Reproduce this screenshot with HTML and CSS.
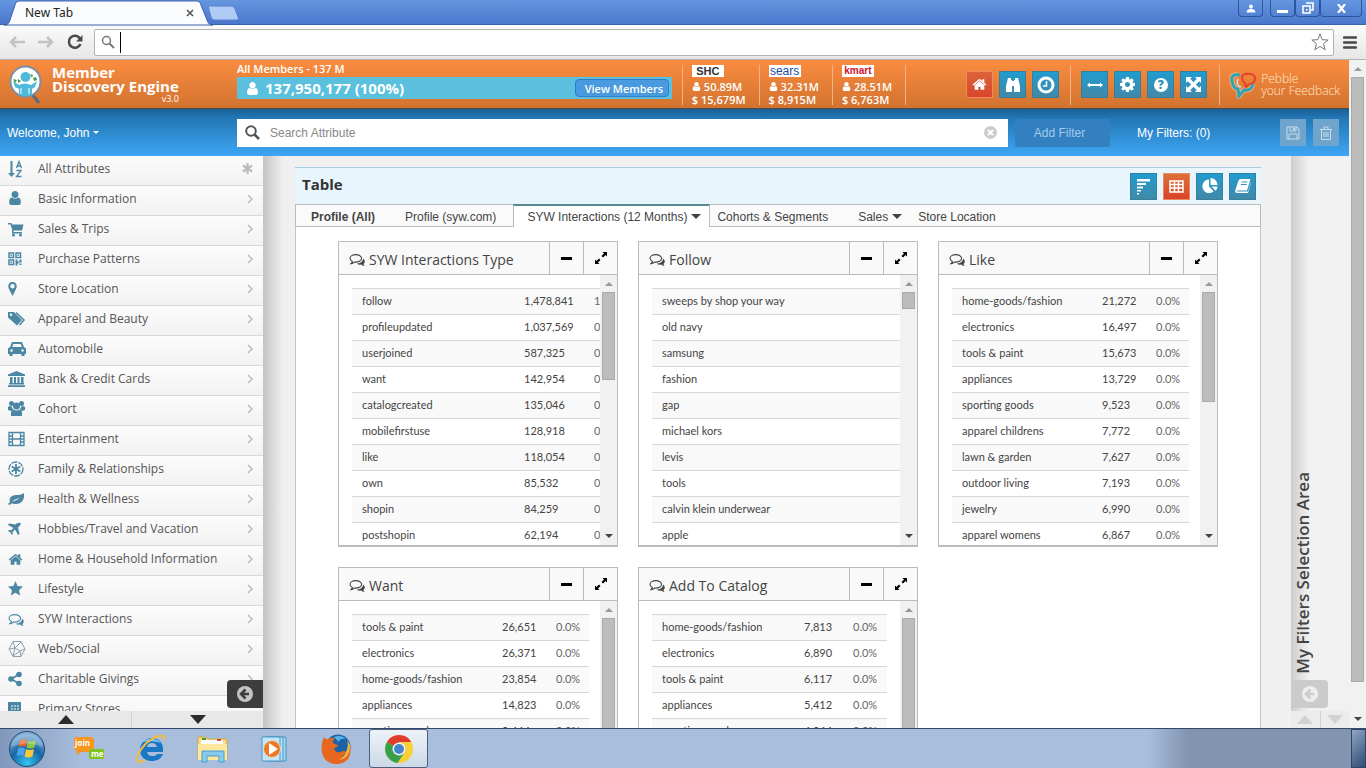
FILE: index.html
```html
<!DOCTYPE html>
<html lang="en">
<head>
  <meta charset="UTF-8">
  <title>Member Discovery Engine</title>
  <link rel="stylesheet" href="styles.css">
</head>
<body>
  <!-- shared icons -->
  <svg class="sprite" aria-hidden="true">
    <symbol id="i-user" viewBox="128 128 1536 1536"><path d="M1536 1399q0 109-62.5 187t-150.5 78h-854q-88 0-150.5-78t-62.5-187q0-85 8.5-160.5t31.5-152 58.5-131 94-89 134.5-34.5q131 128 313 128t313-128q76 0 134.5 34.5t94 89 58.5 131 31.5 152 8.5 160.5zm-256-887q0 159-112.5 271.5t-271.5 112.5-271.5-112.5-112.5-271.5 112.5-271.5 271.5-112.5 271.5 112.5 112.5 271.5z"/></symbol>
    <symbol id="i-home" viewBox="0 128 1792 1536"><path d="M1472 992v480q0 26-19 45t-45 19h-384v-384h-256v384h-384q-26 0-45-19t-19-45v-480q0-1 .5-3t.5-3l575-474 575 474q1 2 1 6zm223-69l-62 74q-8 9-21 11h-3q-13 0-21-7l-692-577-692 577q-12 8-24 7-13-2-21-11l-62-74q-8-10-7-23.5t11-21.5l719-599q32-26 76-26t76 26l244 204v-195q0-14 9-23t23-9h192q14 0 23 9t9 23v408l219 182q10 8 11 21.5t-7 23.5z"/></symbol>
    <symbol id="i-comments" viewBox="0 0 16 14"><path d="M6.800 1.600C3.600 1.600 1 3.200 1 5.300c0 1.300 1 2.400 2.400 3.100-.1.900-.6 1.500-1.400 2.200 1.500-.1 2.600-.7 3.400-1.500 4 .4 7.200-1.300 7.200-3.800 0-2.100-2.600-3.700-5.800-3.700z" fill="none" stroke="currentColor" stroke-width="1.100"/><path d="M14 5.500c2.400 1.900 2.200 4.100.4 5.400.1.900.6 1.400 1.300 2-1.600 0-2.800-.5-3.600-1.300-1.800.2-3.400-.1-4.500-.9 3.800-.1 6.600-2.200 6.400-5.200z"/></symbol>
    <symbol id="i-chevron" viewBox="0 0 6 10"><path d="M1 1l4 4-4 4" fill="none" stroke="#bbb" stroke-width="1.500"/></symbol>
    <symbol id="i-up" viewBox="0 0 8 4"><path d="M0 4l4-4 4 4z"/></symbol>
    <symbol id="i-down" viewBox="0 0 8 4"><path d="M0 0l4 4 4-4z"/></symbol>
    <symbol id="i-expand" viewBox="0 0 12 12"><path d="M7.500 0H12v4.500L10.500 3 8 5.500 6.500 4 9 1.500zM4.500 12H0V7.500L1.500 9 4 6.500 5.500 8 3 10.500z"/></symbol>
    <symbol id="i-back" viewBox="0 0 18 18"><circle cx="9" cy="9" r="8"/><path d="M9.500 4.500L5 9l4.500 4.500M5.500 9H13" fill="none" stroke="var(--arrow)" stroke-width="2.500"/></symbol>
  </svg>

  <div class="titlebar">
    <div class="browser-tab">
      <svg class="tab-shape" viewBox="0 0 203 25" preserveAspectRatio="none"><path d="M-3 25c4 0 5-2 6-5l5-15c1-3 2-4 5-4h176c3 0 4 1 5 4l6 15c1 3 2 5 6 5z" fill="#fbfcfe" stroke="#3c62ac"/></svg>
      <span>New Tab</span>
      <button class="tab-close" aria-label="Close tab"><svg width="8" height="8" viewBox="0 0 8 8"><path d="M1 1l6 6M7 1L1 7" stroke="#555" stroke-width="1.600"/></svg></button>
    </div>
    <button class="new-tab" aria-label="New tab"><svg width="32" height="16" viewBox="0 0 32 16"><path d="M1 1h23c2 0 3 1 4 3l3 8c1 2 0 3-2 3H8c-2 0-3-1-4-3z" fill="#adcbf5" stroke="#5a82cc"/></svg></button>
    <div class="window-controls">
      <button aria-label="Profile"><svg width="10" height="11" viewBox="0 0 10 11"><circle cx="5" cy="3.500" r="2"/><path d="M.5 9.500c0-5 9-5 9 0z"/></svg></button>
      <div class="control-group">
        <button aria-label="Minimize"><svg width="11" height="11" viewBox="0 0 11 11"><path d="M0 7h11v3H0z"/></svg></button>
        <button aria-label="Restore"><svg width="12" height="12" viewBox="0 0 12 12"><path d="M4 1h7v7H9M1 4h7v7H1z" fill="none" stroke="#fff" stroke-width="1.600"/><path d="M4 7h1.500v1.500H4z"/></svg></button>
        <button class="wide" aria-label="Close"><svg width="9" height="9" viewBox="0 0 9 9"><path d="M1 0l7 9M8 0L1 9" stroke="#fff" stroke-width="2.200"/></svg></button>
      </div>
    </div>
  </div>

  <div class="toolbar">
    <button aria-label="Back"><svg width="16" height="14" viewBox="0 0 16 14"><path d="M7 2L2 7l5 5M2 7h14" fill="none" stroke="#c2c2c2" stroke-width="2.500"/></svg></button>
    <button aria-label="Forward"><svg width="16" height="14" viewBox="0 0 16 14"><path d="M9 2l5 5-5 5M14 7H0" fill="none" stroke="#c2c2c2" stroke-width="2.500"/></svg></button>
    <button aria-label="Reload"><svg width="16" height="16" viewBox="0 0 16 16"><path d="M13 4.500A6 6 0 1 0 13.500 10" fill="none" stroke="#4a4a4a" stroke-width="2.500"/><path d="M15.500 1v6.500H9z" fill="#4a4a4a"/></svg></button>
    <div class="address">
      <svg width="14" height="14" viewBox="0 0 14 14"><circle cx="5.500" cy="5.500" r="4" fill="none" stroke="#777" stroke-width="1.500"/><path d="M8.500 8.500L13 13" stroke="#777" stroke-width="2"/></svg>
      <span class="cursor"></span>
      <input type="text" aria-label="Address">
      <svg width="18" height="18" viewBox="0 0 18 18"><path d="M9 1l2.200 5.700 6 .3-4.700 3.800 1.600 5.900L9 13.400l-5.100 3.300 1.600-5.900L.8 7l6-.3z" fill="none" stroke="#777"/></svg>
    </div>
    <button class="menu" aria-label="Menu"><svg width="14" height="13" viewBox="0 0 14 13"><path d="M1 1.500h12M1 6.500h12M1 11.500h12" stroke="#484848" stroke-width="2.500" stroke-linecap="round"/></svg></button>
  </div>

  <div class="viewport">
    <div class="page">
      <header class="header">
        <div class="brand">
          <svg width="34" height="40" viewBox="0 0 34 40"><path d="M23 29l7 9" stroke="#5d6a7d" stroke-width="3"/><circle cx="16.500" cy="16.500" r="15" fill="#fff" stroke="#7c8da5" stroke-width="2"/><path d="M4 16l6 4q6-3 12 0l6-4-2 6-3 2v6q-6 3-13 0v-6l-4-2z" fill="#4fb9da"/><circle cx="16.500" cy="12" r="5" fill="#4fb9da"/><path d="M4 14l4 1-2 3zM9 14l3 2-3 2zM21 9l3 1-1 3zM24 13l3-1 1 3-3 1z" fill="#3f9e46"/><path d="M12 23v6M20 23v6" stroke="#fff"/></svg>
          <div class="brand-text">Member<br>Discovery Engine<small>v3.0</small></div>
        </div>
        <div class="members">
          <span class="members-label">All Members - 137 M</span>
          <div class="members-bar">
            <svg width="13" height="13"><use href="#i-user"/></svg>
            <strong>137,950,177 (100%)</strong>
            <button>View Members</button>
          </div>
        </div>
        <div class="stat">
          <span class="store shc">SHC</span>
          <span><svg width="9" height="9"><use href="#i-user"/></svg>50.89M</span>
          <span>$ 15,679M</span>
        </div>
        <div class="stat">
          <span class="store sears">sears</span>
          <span><svg width="9" height="9"><use href="#i-user"/></svg>32.31M</span>
          <span>$ 8,915M</span>
        </div>
        <div class="stat">
          <span class="store kmart">kmart</span>
          <span><svg width="9" height="9"><use href="#i-user"/></svg>28.51M</span>
          <span>$ 6,763M</span>
        </div>
        <div class="tools tools-first">
          <button class="tile tile-home" aria-label="Home"><svg width="15" height="13"><use href="#i-home"/></svg></button>
          <button class="tile" aria-label="Find"><svg width="16" height="16" viewBox="0 0 16 16"><path d="M3 1h3v2h1v12H1V9zM10 1h3l2 8v6H9V3h1z"/><path d="M7 4h2v5H7z"/></svg></button>
          <button class="tile" aria-label="History"><svg width="18" height="18" viewBox="0 0 18 18"><circle cx="9" cy="9" r="7" fill="none" stroke="#fff" stroke-width="3"/><path d="M9.500 5v5H6" fill="none" stroke="#fff" stroke-width="1.500"/></svg></button>
        </div>
        <div class="tools">
          <button class="tile" aria-label="Width"><svg width="16" height="8" viewBox="0 0 16 8"><path d="M0 4l3-2.500V3h10V1.500L16 4l-3 2.500V5H3v1.500z"/></svg></button>
          <button class="tile" aria-label="Settings"><svg width="15" height="15" viewBox="128 128 1536 1536"><path d="M1152 896q0-106-75-181t-181-75-181 75-75 181 75 181 181 75 181-75 75-181zm512-109v222q0 12-8 23t-20 13l-185 28q-19 54-39 91 35 50 107 138 10 12 10 25t-9 23q-27 37-99 108t-94 71q-12 0-26-9l-138-108q-44 23-91 38-16 136-29 186-7 28-36 28h-222q-14 0-24.500-8.500t-11.500-21.500l-28-184q-49-16-90-37l-141 107q-10 9-25 9-14 0-25-11-126-114-165-168-7-10-7-23 0-12 8-23 15-21 51-66.500t54-70.500q-27-50-41-99l-183-27q-13-2-21-12.500t-8-23.500v-222q0-12 8-23t19-13l186-28q14-46 39-92-40-57-107-138-10-12-10-24 0-10 9-23 26-36 98.500-107.500t94.500-71.500q13 0 26 10l138 107q44-23 91-38 16-136 29-186 7-28 36-28h222q14 0 24.500 8.500t11.500 21.500l28 184q49 16 90 37l142-107q9-9 24-9 13 0 25 10 129 119 165 170 7 8 7 22 0 12-8 23-15 21-51 66.500t-54 70.500q26 50 41 98l183 28q13 2 21 12.500t8 23.500z"/></svg></button>
          <button class="tile" aria-label="Help"><span class="help">?</span></button>
          <button class="tile" aria-label="Full screen"><svg width="15" height="15" viewBox="0 0 15 15"><path d="M0 0h6L4.200 1.800 7.500 5.200l3.300-3.400L9 0h6v6l-1.800-1.800-3.400 3.300 3.400 3.300L15 9v6H9l1.800-1.800-3.300-3.400-3.300 3.400L6 15H0V9l1.800 1.800 3.400-3.300-3.400-3.300L0 6z"/></svg></button>
        </div>
        <a class="pebble" href="#">
          <svg width="28" height="28" viewBox="0 0 28 28" fill="none"><path d="M9 4C4 3 2 5 3 10c1 6 3 8 6 8l1 7 5-6c6 1 8-2 9-6" fill="none" stroke="#f8dcc4" stroke-width="5" opacity=".5"/><path d="M11 4C4 3 2 5 3 10c1 6 3 8 6 8l1 7 5-6c6 1 8-2 9-6" fill="none" stroke="#2aa5b5" stroke-width="3"/><path d="M13 6c0-5 13-4 13 1 0 6-4 6-6 6l-3 3-1-4c-2-1-3-3-3-6z" fill="none" stroke="#e8402c" stroke-width="2"/><path d="M9 8c-2 5 0 7 3 8" fill="none" stroke="#cfe9ea" stroke-width="1.500"/></svg>
          <span>Pebble<br>your Feedback</span>
        </a>
      </header>

      <div class="filterbar">
        <button class="welcome">Welcome, John <svg width="6" height="3"><use href="#i-down"/></svg></button>
        <div class="search">
          <svg width="15" height="15" viewBox="0 0 15 15"><circle cx="6" cy="6" r="4.800" fill="none" stroke="#555" stroke-width="2"/><path d="M9.500 9.500L14 14" stroke="#555" stroke-width="2.500"/></svg>
          <input type="text" placeholder="Search Attribute" aria-label="Search Attribute">
          <button aria-label="Clear"><svg width="13" height="13" viewBox="0 0 13 13"><circle cx="6.500" cy="6.500" r="6.500" fill="#ccc"/><path d="M4 4l5 5M9 4L4 9" stroke="#fff" stroke-width="2"/></svg></button>
        </div>
        <button class="add-filter">Add Filter</button>
        <span class="my-filters">My Filters: (0)</span>
        <div class="filter-actions">
          <button aria-label="Save"><svg width="14" height="14" viewBox="0 0 14 14"><path d="M1 1h10l2 2v10H1zM4 1v4h6V1M3 13V8h8v5" fill="none" stroke="#c9dcea"/><path d="M7 2h2v2H7z" fill="#c9dcea"/></svg></button>
          <button aria-label="Delete"><svg width="14" height="14" viewBox="0 0 14 14"><path d="M1 3.500h12M5 3V1h4v2M2.500 3.500v10h9v-10M5 6v5M7 6v5M9 6v5" fill="none" stroke="#c9dcea"/></svg></button>
        </div>
      </div>

      <div class="body">
        <nav class="sidebar">
          <ul>
            <li><a href="#"><svg class="icon" viewBox="0 0 18 18"><path d="M2.500 1h2v12H7l-3.500 4L0 13h2.500z"/><path d="M8.500 8L11 1.500 13.500 8M9.500 6h3M8.500 10.500h4.500L8.500 16.500h5" fill="none" stroke="currentColor" stroke-width="1.300"/></svg>All Attributes<svg class="mark" width="11" height="11" viewBox="0 0 11 11"><path d="M5.500 0v11M1 2.500l9 6M10 2.500l-9 6" stroke="#bbb" stroke-width="2.200"/></svg></a></li>
            <li><a href="#"><svg class="icon" viewBox="0 0 18 18"><svg width="14" height="14" y="1"><use href="#i-user"/></svg></svg>Basic Information<svg class="arrow"><use href="#i-chevron"/></svg></a></li>
            <li><a href="#"><svg class="icon" viewBox="0 0 18 18"><path d="M0 3h3.500l.4 1.500H15.500L14 10.500H5.500V12H14v1.500H4L4 9 2.500 4.500H0z"/><circle cx="5.500" cy="15" r="1.500"/><circle cx="12.500" cy="15" r="1.500"/></svg>Sales &amp; Trips<svg class="arrow"><use href="#i-chevron"/></svg></a></li>
            <li><a href="#"><svg class="icon" viewBox="0 0 18 18"><path d="M1 3h4.500v4.500H1zM8 3h4.500v4.500H8zM1 10h4.500v4.500H1z" fill="none" stroke="currentColor" stroke-width="1.500"/><path d="M2.500 4.500H4V6H2.500zM9.500 4.500H11V6H9.500zM2.500 11.500H4V13H2.500zM7.500 9.500h2v2h2v-2h2v3h-3v1h-1v2h-2zM11.500 13.500h2v1.500h-2z"/></svg>Purchase Patterns<svg class="arrow"><use href="#i-chevron"/></svg></a></li>
            <li><a href="#"><svg class="icon" viewBox="0 0 18 18"><path d="M4.500 2C1.500 2 .3 4 .3 6.300.300 8 1 9 1.500 10l3 6 3-6c.5-1 1.200-2 1.200-3.700C8.700 4 7.500 2 4.500 2zm0 2a2.200 2.200 0 1 1 0 4.400 2.200 2.200 0 0 1 0-4.400z"/></svg>Store Location<svg class="arrow"><use href="#i-chevron"/></svg></a></li>
            <li><a href="#"><svg class="icon" viewBox="0 0 18 18"><path d="M0 2h6l8 8-5 5.500-9-8zm3 1.500a1.200 1.200 0 1 0 0 2.400 1.200 1.200 0 0 0 0-2.400z" fill-rule="evenodd"/><path d="M8 2.500l8 7.500-4.500 5" fill="none" stroke="currentColor" stroke-width="1.500"/></svg>Apparel and Beauty<svg class="arrow"><use href="#i-chevron"/></svg></a></li>
            <li><a href="#"><svg class="icon" viewBox="0 0 18 18"><path d="M4 2h10l2 5 2 1.500V14h-1.500v2h-3v-2h-9v2h-3v-2H0V8.500L2 7zm1.300 2L4.200 7h9.600l-1.100-3zM3.500 9.200a1.300 1.300 0 1 0 0 2.600 1.300 1.300 0 0 0 0-2.600zm11 0a1.300 1.300 0 1 0 0 2.600 1.300 1.300 0 0 0 0-2.600z" fill-rule="evenodd"/></svg>Automobile<svg class="arrow"><use href="#i-chevron"/></svg></a></li>
            <li><a href="#"><svg class="icon" viewBox="0 0 18 18"><path d="M8.500 1L17 4.500V6H0V4.500zM2 7h2.500v6H6V7h2v6h1.500V7h2v6H13V7h2.500v6h.5v1.500H1V13h1zM0 15.200h17V17H0z"/></svg>Bank &amp; Credit Cards<svg class="arrow"><use href="#i-chevron"/></svg></a></li>
            <li><a href="#"><svg class="icon" viewBox="0 0 18 18"><circle cx="3.500" cy="3.500" r="2.500"/><circle cx="13.500" cy="3.500" r="2.500"/><circle cx="8.500" cy="6" r="3.500"/><path d="M0 10V7q2-2 4 0c.3 1.500 1 2.500 2 3-2 0-3 1-3 1zM17 10V7q-2-2-4 0c-.3 1.500-1 2.500-2 3 2 0 3 1 3 1zM3 16v-3q0-3 2.500-3.500 3 2 6 0Q14 10 14 13v3z"/></svg>Cohort<svg class="arrow"><use href="#i-chevron"/></svg></a></li>
            <li><a href="#"><svg class="icon" viewBox="0 0 18 18"><path d="M1 2.500h15v13H1zM4.500 2.500v13M12.500 2.500v13M4.500 9h8M1 6h3.500M1 9h3.500M1 12h3.500M12.500 6H16M12.500 9H16M12.500 12H16" fill="none" stroke="currentColor" stroke-width="1.300"/></svg>Entertainment<svg class="arrow"><use href="#i-chevron"/></svg></a></li>
            <li><a href="#"><svg class="icon" viewBox="0 0 18 18"><circle cx="8" cy="9" r="7" fill="none" stroke="currentColor" stroke-width="1.300" stroke-dasharray="6 1"/><path d="M8 4v10M3.700 6.500l8.600 5M12.300 6.500l-8.600 5" stroke="currentColor" stroke-width="1.800"/></svg>Family &amp; Relationships<svg class="arrow"><use href="#i-chevron"/></svg></a></li>
            <li><a href="#"><svg class="icon" viewBox="0 0 18 18"><path d="M16 3c.8 7-2.500 11-8 11-2 0-3-.5-4.500-.5L1.500 15 0 14l2-2C.500 7.500 4 5 9 5c3 0 5-.5 7-2zM4 11.500c3-.5 5.500-1.500 8-4-3 1.500-5.500 1.800-8 4z" fill-rule="evenodd"/></svg>Health &amp; Wellness<svg class="arrow"><use href="#i-chevron"/></svg></a></li>
            <li><a href="#"><svg class="icon" viewBox="0 0 18 18"><path d="M12.500 3c.5.5 0 2-1.500 3.500l-1 1L11.500 14l-1.500 1-3-5.500-2.500 2.500.3 2-1 1-1.300-2.500L0 11l1-1 2 .3L5.500 8 0 5l1-1.500 6.500 1 1-1C10 2.500 12 2.500 12.500 3z"/></svg>Hobbies/Travel and Vacation<svg class="arrow"><use href="#i-chevron"/></svg></a></li>
            <li><a href="#"><svg class="icon" viewBox="0 0 18 18"><svg width="15" height="13" y="3"><use href="#i-home"/></svg></svg>Home &amp; Household Information<svg class="arrow"><use href="#i-chevron"/></svg></a></li>
            <li><a href="#"><svg class="icon" viewBox="0 0 18 18"><path d="M7.500 1l2 5 5.500.5-4 3.700 1.200 5.300-4.700-2.800-4.700 2.800L4 10.200 0 6.500 5.500 6z"/></svg>Lifestyle<svg class="arrow"><use href="#i-chevron"/></svg></a></li>
            <li><a href="#"><svg class="icon" viewBox="0 0 18 18"><svg width="16" height="14" y="3"><use href="#i-comments"/></svg></svg>SYW Interactions<svg class="arrow"><use href="#i-chevron"/></svg></a></li>
            <li><a href="#"><svg class="icon" viewBox="0 0 18 18"><path d="M5 1.500h8L17 9l-4 7.500H5L1 9zM5 2l2 6 6-6M1 9l6-1 5 3 5-2M5 16l2-8M5 16l7-5 1 5" fill="none" stroke="#7d97a5" stroke-width=".9"/></svg>Web/Social<svg class="arrow"><use href="#i-chevron"/></svg></a></li>
            <li><a href="#"><svg class="icon" viewBox="0 0 18 18"><circle cx="11" cy="4.500" r="2.800"/><circle cx="3" cy="9" r="2.800"/><circle cx="11" cy="13.500" r="2.800"/><path d="M11 4.500L3 9l8 4.500" fill="none" stroke="currentColor" stroke-width="1.800"/></svg>Charitable Givings<svg class="arrow"><use href="#i-chevron"/></svg></a></li>
            <li><a href="#"><svg class="icon" viewBox="0 0 18 18"><path d="M0 2h13v14H0z"/><path d="M3 6h2m1 0h2m1 0h2M3 9h2m1 0h2m1 0h2M3 12h2m1 0h2m1 0h2" stroke="#fff"/></svg>Primary Stores</a></li>
          </ul>
          <div class="pager">
            <button aria-label="Scroll up"><svg width="16" height="9" viewBox="0 0 8 4" preserveAspectRatio="none"><path d="M0 4l4-4 4 4z"/></svg></button>
            <button aria-label="Scroll down"><svg width="16" height="9" viewBox="0 0 8 4" preserveAspectRatio="none"><path d="M0 0l4 4 4-4z"/></svg></button>
          </div>
          <button class="collapse" aria-label="Collapse"><svg width="18" height="18"><use href="#i-back"/></svg></button>
        </nav>

        <main class="main">
          <div class="panel-head">
            <h1>Table</h1>
            <div class="views">
              <button class="tile" aria-label="Bars"><svg width="16" height="17" viewBox="0 0 16 17"><path d="M1 1h13v2.500H1zM1 5h9v2H1zM1 8.500h6v2H1zM1 12h4v1.500H1zM1 15h2v1.500H1z"/></svg></button>
              <button class="tile tile-table" aria-label="Table"><svg width="15" height="13" viewBox="0 0 15 13"><path d="M1 1h13v11H1zM1 4.500h13M1 8h13M5.500 1v11M9.500 1v11" fill="none" stroke="#fff" stroke-width="1.500"/></svg></button>
              <button class="tile" aria-label="Pie"><svg width="16" height="16" viewBox="0 0 16 16"><path d="M7 1.500v7l4.800 4.800A6.800 6.800 0 1 1 7 1.500zM8.500 0A7 7 0 0 1 15.500 7h-7zM9.500 8.500h6c0 2-.8 3.300-2 4.300z"/></svg></button>
              <button class="tile" aria-label="Book"><svg width="16" height="14" viewBox="0 0 16 14"><path d="M5 0h10.500L12 11.500H2.500c-1 0-1 1 0 1H13L16 3v1l-3 10H2C0 14 0 12 .5 10.500L3.500 1.500z"/><path d="M6.500 3h6M5.800 5.500h6" stroke="#3a93bd"/></svg></button>
            </div>
          </div>
          <div class="tabs">
            <button class="first">Profile (All)</button>
            <button>Profile (syw.com)</button>
            <button class="active">SYW Interactions (12 Months) <svg width="10" height="5"><use href="#i-down"/></svg></button>
            <button class="after-menu">Cohorts &amp; Segments</button>
            <button class="has-menu">Sales <svg width="10" height="5"><use href="#i-down"/></svg></button>
            <button class="after-menu">Store Location</button>
          </div>
          <div class="cards">
            <section class="card">
              <div class="card-head">
                <h2><svg width="16" height="14"><use href="#i-comments"/></svg>SYW Interactions Type</h2>
                <button aria-label="Minimize"><svg width="11" height="3"><rect width="11" height="3"/></svg></button>
                <button aria-label="Expand"><svg width="12" height="12"><use href="#i-expand"/></svg></button>
              </div>
              <div class="card-body">
                <div class="table-wrap">
                  <table class="wide-table">
                    <tr><td>follow</td><td>1,478,841</td><td>1</td></tr>
                    <tr><td>profileupdated</td><td>1,037,569</td><td>0</td></tr>
                    <tr><td>userjoined</td><td>587,325</td><td>0</td></tr>
                    <tr><td>want</td><td>142,954</td><td>0</td></tr>
                    <tr><td>catalogcreated</td><td>135,046</td><td>0</td></tr>
                    <tr><td>mobilefirstuse</td><td>128,918</td><td>0</td></tr>
                    <tr><td>like</td><td>118,054</td><td>0</td></tr>
                    <tr><td>own</td><td>85,532</td><td>0</td></tr>
                    <tr><td>shopin</td><td>84,259</td><td>0</td></tr>
                    <tr><td>postshopin</td><td>62,194</td><td>0</td></tr>
                  </table>
                </div>
                <div class="scrollbar"><svg class="up"><use href="#i-up"/></svg><i class="thumb thumb-medium"></i><svg class="down"><use href="#i-down"/></svg></div>
              </div>
            </section>

            <section class="card">
              <div class="card-head">
                <h2><svg width="16" height="14"><use href="#i-comments"/></svg>Follow</h2>
                <button aria-label="Minimize"><svg width="11" height="3"><rect width="11" height="3"/></svg></button>
                <button aria-label="Expand"><svg width="12" height="12"><use href="#i-expand"/></svg></button>
              </div>
              <div class="card-body">
                <div class="table-wrap">
                  <table class="wide-table">
                    <tr><td>sweeps by shop your way</td></tr>
                    <tr><td>old navy</td></tr>
                    <tr><td>samsung</td></tr>
                    <tr><td>fashion</td></tr>
                    <tr><td>gap</td></tr>
                    <tr><td>michael kors</td></tr>
                    <tr><td>levis</td></tr>
                    <tr><td>tools</td></tr>
                    <tr><td>calvin klein underwear</td></tr>
                    <tr><td>apple</td></tr>
                  </table>
                </div>
                <div class="scrollbar"><svg class="up"><use href="#i-up"/></svg><i class="thumb thumb-small"></i><svg class="down"><use href="#i-down"/></svg></div>
              </div>
            </section>

            <section class="card">
              <div class="card-head">
                <h2><svg width="16" height="14"><use href="#i-comments"/></svg>Like</h2>
                <button aria-label="Minimize"><svg width="11" height="3"><rect width="11" height="3"/></svg></button>
                <button aria-label="Expand"><svg width="12" height="12"><use href="#i-expand"/></svg></button>
              </div>
              <div class="card-body">
                <div class="table-wrap">
                  <table>
                    <tr><td>home-goods/fashion</td><td>21,272</td><td>0.0%</td></tr>
                    <tr><td>electronics</td><td>16,497</td><td>0.0%</td></tr>
                    <tr><td>tools &amp; paint</td><td>15,673</td><td>0.0%</td></tr>
                    <tr><td>appliances</td><td>13,729</td><td>0.0%</td></tr>
                    <tr><td>sporting goods</td><td>9,523</td><td>0.0%</td></tr>
                    <tr><td>apparel childrens</td><td>7,772</td><td>0.0%</td></tr>
                    <tr><td>lawn &amp; garden</td><td>7,627</td><td>0.0%</td></tr>
                    <tr><td>outdoor living</td><td>7,193</td><td>0.0%</td></tr>
                    <tr><td>jewelry</td><td>6,990</td><td>0.0%</td></tr>
                    <tr><td>apparel womens</td><td>6,867</td><td>0.0%</td></tr>
                  </table>
                </div>
                <div class="scrollbar"><svg class="up"><use href="#i-up"/></svg><i class="thumb thumb-large"></i><svg class="down"><use href="#i-down"/></svg></div>
              </div>
            </section>

            <section class="card">
              <div class="card-head">
                <h2><svg width="16" height="14"><use href="#i-comments"/></svg>Want</h2>
                <button aria-label="Minimize"><svg width="11" height="3"><rect width="11" height="3"/></svg></button>
                <button aria-label="Expand"><svg width="12" height="12"><use href="#i-expand"/></svg></button>
              </div>
              <div class="card-body">
                <div class="table-wrap">
                  <table>
                    <tr><td>tools &amp; paint</td><td>26,651</td><td>0.0%</td></tr>
                    <tr><td>electronics</td><td>26,371</td><td>0.0%</td></tr>
                    <tr><td>home-goods/fashion</td><td>23,854</td><td>0.0%</td></tr>
                    <tr><td>appliances</td><td>14,823</td><td>0.0%</td></tr>
                    <tr><td>sporting goods</td><td>9,444</td><td>0.0%</td></tr>
                  </table>
                </div>
                <div class="scrollbar"><svg class="up"><use href="#i-up"/></svg><i class="thumb thumb-full"></i></div>
              </div>
            </section>

            <section class="card">
              <div class="card-head">
                <h2><svg width="16" height="14"><use href="#i-comments"/></svg>Add To Catalog</h2>
                <button aria-label="Minimize"><svg width="11" height="3"><rect width="11" height="3"/></svg></button>
                <button aria-label="Expand"><svg width="12" height="12"><use href="#i-expand"/></svg></button>
              </div>
              <div class="card-body">
                <div class="table-wrap">
                  <table class="short-table">
                    <tr><td>home-goods/fashion</td><td>7,813</td><td>0.0%</td></tr>
                    <tr><td>electronics</td><td>6,890</td><td>0.0%</td></tr>
                    <tr><td>tools &amp; paint</td><td>6,117</td><td>0.0%</td></tr>
                    <tr><td>appliances</td><td>5,412</td><td>0.0%</td></tr>
                    <tr><td>sporting goods</td><td>4,244</td><td>0.0%</td></tr>
                  </table>
                </div>
                <div class="scrollbar"><svg class="up"><use href="#i-up"/></svg><i class="thumb thumb-full"></i></div>
              </div>
            </section>
          </div>
        </main>

        <aside class="rail">
          <span class="rail-title">My Filters Selection Area</span>
          <button class="rail-toggle" aria-label="Open filters"><svg width="18" height="18"><use href="#i-back"/></svg></button>
          <div class="pager">
            <button aria-label="Scroll up"><svg width="16" height="9" viewBox="0 0 8 4" preserveAspectRatio="none"><path d="M0 4l4-4 4 4z"/></svg></button>
            <button aria-label="Scroll down"><svg width="16" height="9" viewBox="0 0 8 4" preserveAspectRatio="none"><path d="M0 0l4 4 4-4z"/></svg></button>
          </div>
        </aside>
      </div>
    </div>
    <div class="scrollbar page-scroll"><svg class="up"><use href="#i-up"/></svg><i class="thumb thumb-page"></i><svg class="down"><use href="#i-down"/></svg></div>
  </div>

  <footer class="taskbar">
    <button class="start" aria-label="Start">
      <svg width="38" height="38" viewBox="0 0 38 38"><defs><radialGradient id="orb" cx=".5" cy=".9" r=".9"><stop offset="0" stop-color="#35c5f0"/><stop offset=".5" stop-color="#1767a5"/><stop offset="1" stop-color="#8db9dd"/></radialGradient></defs><circle cx="19" cy="19" r="17.500" fill="url(#orb)" stroke="#24466f"/><path d="M12 11q4-3 7-1l-1.500 7q-3-2-7 0z" fill="#f0602a"/><path d="M20 10.500q4 2 8-.5l-1.500 7.500q-4 2-8 0z" fill="#8cc63f"/><path d="M10 18.500q4-2 7 0L15.500 26q-3-2-7 0z" fill="#4aa5ee"/><path d="M18 19q4 2 8 0l-1.500 7.500q-4 2-8 0z" fill="#fdc73a"/><path d="M3 17C4 0 34 0 35 17q-16-7-32 0z" fill="#fff" opacity=".25"/></svg>
    </button>
    <button aria-label="join.me"><svg width="32" height="26" viewBox="0 0 32 26"><path d="M4 1h13q4 0 4 4v7q0 4-4 4H8l-4 3v-4q-3-1-3-4V4q0-3 3-3z" fill="#f7961e"/><rect x="16" y="13" width="15" height="10" rx="2" fill="#7fc31c"/><text x="2" y="10" class="join-text">join</text><text x="18" y="21" class="join-text">me</text></svg></button>
    <button aria-label="Internet Explorer"><svg width="32" height="30" viewBox="0 0 32 30"><path d="M28 18H12q1 4 5 4 4 0 5-2h6c-2 5-6 7-11 7C9 27 5 22 5 16S10 4 17 4s12 5 11 14zM12 13h10q-1-4-5-4t-5 4z" fill="#1b76c4" fill-rule="evenodd"/><path d="M8 8Q12 4 18 5q5 0 8 4-7-3-18-1z" fill="#7cc3ef"/><path d="M10 26C2 31-1 27 5 17 11 7 22 1 28 2q2 1 1 4" fill="none" stroke="#f2bd3b" stroke-width="2"/></svg></button>
    <button aria-label="Explorer"><svg width="34" height="30" viewBox="0 0 34 30"><path d="M2 3h8l2 2h19v20H2z" fill="#f7dc81" stroke="#c9a845"/><path d="M5 6h22v4H5z" fill="#fff"/><path d="M6 4h4v2H6z" fill="#3a9b44"/><path d="M21 5h4v2h-4z" fill="#d54a35"/><path d="M2 10h29v16H2z" fill="#fbe89d"/><path d="M6 28V17h22v11h-5v-6H11v6z" fill="#85cbed" stroke="#4c9ccc"/></svg></button>
    <button aria-label="Media Player"><svg width="30" height="26" viewBox="0 0 30 26"><path d="M8 1h18v24H8z" fill="#a5d6ef" stroke="#4a98c5"/><path d="M5 1h18v24H5z" fill="#b9e0f3" stroke="#4a98c5"/><path d="M2 1h18v24H2z" fill="#c5e4f5" stroke="#4a98c5"/><circle cx="12" cy="13" r="8.500" fill="#f07822" stroke="#d8dfe5"/><path d="M9 7l9 6-9 6z" fill="#fff"/></svg></button>
    <button aria-label="Firefox"><svg width="32" height="32" viewBox="0 0 32 32"><circle cx="17" cy="14" r="12.500" fill="#1d62a8"/><path d="M13 4q7-3 12 2-7-1-7 3z" fill="#58b4e8"/><path d="M3 4q2 3 5 2 3-2 6-1-3 3-2 5l5 2q0 2-4 3 1 5 6 4 4-2 6 0-2 5-7 5 9 1 11-12 3 17-12 19C0 32-2 15 3 4z" fill="#e66820"/><path d="M29 12q0 14-12 15 6-2 8-8 3-6 1-12z" fill="#f8b83b"/></svg></button>
    <button class="running" aria-label="Chrome"><svg width="30" height="30" viewBox="0 0 30 30"><circle cx="15" cy="15" r="14" fill="#f7d038"/><path d="M15 15L3 8a14 14 0 0 1 24.300 0H15z" fill="#e13b30"/><path d="M15 15L3 8a14 14 0 0 0 10.500 21l6-9z" fill="#38a04a"/><circle cx="15" cy="15" r="6.500" fill="#f4f4f4"/><circle cx="15" cy="15" r="5" fill="#4285cf"/></svg></button>
    <button class="show-desktop" aria-label="Show desktop"></button>
  </footer>
</body>
</html>
```
FILE: styles.css
```css
* {
  box-sizing: border-box;
}
body {
  margin: 0;
  height: 100vh;
  display: flex;
  flex-direction: column;
  overflow: hidden;
  font-family: "Trebuchet MS", "Open Sans", sans-serif;
  font-size: 12px;
  color: #444;
}
button {
  display: flex;
  align-items: center;
  justify-content: center;
  padding: 0;
  border: none;
  background: none;
  font: inherit;
  color: inherit;
  cursor: pointer;
}
input {
  flex: 1;
  min-width: 0;
  border: none;
  outline: none;
  background: none;
  font: inherit;
}
svg {
  flex: none;
  fill: currentColor;
}
a {
  color: inherit;
  text-decoration: none;
}
.sprite {
  position: absolute;
  width: 0;
  height: 0;
}

/* browser window */
.titlebar {
  flex: none;
  display: flex;
  height: 25px;
  background: linear-gradient(#6596df, #4a77cd);
  border-bottom: 1px solid #3c62ac;
}
.browser-tab {
  position: relative;
  display: flex;
  align-items: center;
  width: 203px;
  height: 25px;
  margin-left: 7px;
  padding: 0 16px 0 18px;
  font-family: "Noto Sans", sans-serif;
  font-size: 12px;
  color: #222;
}
.browser-tab span {
  position: relative;
  flex: 1;
}
.tab-shape {
  position: absolute;
  left: 0;
  top: 0;
  width: 100%;
  height: 100%;
  overflow: visible;
}
.tab-close {
  position: relative;
}
.new-tab {
  height: 25px;
  margin-left: -3px;
}
.window-controls {
  display: flex;
  align-items: flex-start;
  gap: 7px;
  margin-left: auto;
  padding-right: 4px;
  color: #fff;
}
.window-controls button {
  width: 25px;
  height: 17px;
  border: 1px solid #2f54a0;
  border-top: none;
  border-radius: 0 0 4px 4px;
}
.control-group {
  display: flex;
}
.window-controls .wide {
  width: 42px;
}
.toolbar {
  flex: none;
  display: flex;
  align-items: center;
  height: 35px;
  padding: 0 9px;
  gap: 13px;
  background: linear-gradient(#fbfbfc, #e6e6e6);
  border-bottom: 1px solid #b9aeb0;
}
.address {
  flex: 1;
  display: flex;
  align-items: center;
  height: 27px;
  margin-left: -2px;
  padding: 0 4px 0 6px;
  background: #fff;
  border: 1px solid #b3b3b3;
  border-radius: 2px;
}
.cursor {
  width: 1px;
  height: 21px;
  margin-left: 5px;
  background: #000;
}
.menu {
  margin-left: -4px;
}
.viewport {
  flex: 1;
  display: flex;
  min-height: 0;
}
.page {
  flex: 1;
  min-width: 0;
  display: flex;
  flex-direction: column;
}

/* header */
.header {
  flex: none;
  display: flex;
  align-items: center;
  height: 49px;
  padding: 1px 9px 0 0;
  background: linear-gradient(#fa8d40, #d2722f);
  border-bottom: 1px solid #4d4a48;
  color: #fff;
}
.brand {
  flex: none;
  display: flex;
  align-items: center;
  width: 237px;
  padding-left: 9px;
  gap: 9px;
}
.brand-text {
  font-size: 15px;
  font-weight: bold;
  line-height: 14px;
}
.brand-text small {
  display: block;
  font-size: 9px;
  font-weight: normal;
  line-height: 12px;
  text-align: right;
}
.members {
  flex: 1;
  margin-right: 10px;
  padding-bottom: 9px;
}
.members-label {
  display: block;
  font-size: 11px;
  font-weight: 600;
  line-height: 16px;
}
.members-bar {
  display: flex;
  align-items: center;
  gap: 6px;
  height: 22px;
  padding: 0 3px 0 9px;
  background: #5bc0de;
}
.members-bar strong {
  flex: 1;
  font-size: 15px;
}
.members-bar button {
  width: 94px;
  height: 18px;
  padding-left: 4px;
  background: #4a9ae0;
  border: 1px solid #2f7dca;
  border-radius: 4px;
  font-size: 11px;
  font-weight: 600;
}
.stat {
  flex: none;
  display: flex;
  flex-direction: column;
  height: 40px;
  padding: 0 13px 0 9px;
  border-left: 1px solid #f7b183;
  font-size: 11px;
  font-weight: 600;
  line-height: 13px;
}
.stat svg {
  margin-right: 3px;
}
.store {
  width: 32px;
  height: 12px;
  margin-bottom: 3px;
  background: #fff;
  font-family: "Liberation Sans", Arial, sans-serif;
  line-height: 12px;
  text-align: center;
}
.shc {
  color: #333;
}
.sears {
  font-size: 12px;
  font-weight: normal;
  color: #1c4b9b;
}
.kmart {
  font-size: 10px;
  font-weight: bold;
  color: #d0112b;
}
.tools {
  display: flex;
  align-items: center;
  gap: 6px;
  height: 40px;
  padding: 0 12px 0 10px;
  border-left: 1px solid #f7b183;
}
.tools-first {
  padding-left: 60px;
  padding-right: 11px;
}
.tile {
  width: 27px;
  height: 27px;
  background: linear-gradient(#209ccf, #4189a8);
  border: 1px solid #36809c;
  color: #fff;
}
.tile-home {
  background: linear-gradient(#dc6339, #d9452c);
  border-color: #f08a5c;
}
.tile-table {
  background: linear-gradient(#dd7038, #d9442b);
  border-color: #e58a63;
}
.help {
  width: 14px;
  height: 14px;
  border-radius: 50%;
  background: #fff;
  color: #2a8fbb;
  font-size: 12px;
  font-weight: 800;
  line-height: 14px;
}
.pebble {
  display: flex;
  align-items: center;
  gap: 4px;
  height: 40px;
  padding-left: 9px;
  border-left: 1px solid #f7b183;
  color: #ffe9ce;
  font-weight: 300;
  line-height: 12px;
}

/* filter bar */
.filterbar {
  flex: none;
  display: flex;
  align-items: center;
  height: 47px;
  padding-right: 10px;
  background: linear-gradient(#1a5f95, #2378b6 20%, #3ea6f4);
  font-family: "Liberation Sans", Arial, sans-serif;
  color: #fff;
}
.welcome {
  justify-content: flex-start;
  gap: 4px;
  width: 237px;
  padding-left: 7px;
}
.search {
  flex: 1;
  display: flex;
  align-items: center;
  gap: 8px;
  height: 28px;
  padding: 0 11px 0 8px;
  background: #fff;
}
.search input::placeholder {
  color: #888;
}
.add-filter {
  width: 95px;
  height: 28px;
  margin-left: 7px;
  padding-right: 6px;
  background: #3280bf;
  border-radius: 3px;
  color: #a3cbeb;
}
.my-filters {
  width: 170px;
  padding-left: 27px;
}
.filter-actions {
  display: flex;
  gap: 7px;
}
.filter-actions button {
  width: 26px;
  height: 27px;
  background: #6fa5cd;
}

/* body columns */
.body {
  flex: 1;
  display: flex;
  min-height: 0;
  background: #f0f0f0;
}
.sidebar {
  position: relative;
  flex: none;
  display: flex;
  flex-direction: column;
  width: 263px;
  background: #f5f5f5;
}
.sidebar ul {
  flex: 1;
  min-height: 0;
  overflow: hidden;
  margin: 0;
  padding: 0;
  list-style: none;
}
.sidebar li a {
  display: flex;
  align-items: center;
  height: 30px;
  padding: 0 10px 4px 8px;
  background: linear-gradient(#fcfcfc, #f2f2f2);
  border-bottom: 1px solid #d9d9d9;
  color: #555;
}
.icon {
  width: 18px;
  height: 18px;
  margin-right: 12px;
  color: #4b87a3;
}
.mark {
  margin-left: auto;
}
.arrow {
  width: 6px;
  height: 10px;
  margin-left: auto;
}
.pager {
  flex: none;
  display: flex;
  height: 17px;
  background: #e8e8e8;
  color: #2b2b2b;
}
.pager button {
  flex: 1;
}
.pager button + button {
  border-left: 1px solid #d0d0d0;
}
.collapse {
  --arrow: #3d3d3d;
  position: absolute;
  right: 0;
  bottom: 20px;
  width: 36px;
  height: 28px;
  background: #3d3d3d;
  border-radius: 4px 0 0 4px;
  color: #c4c4c4;
}
.main {
  flex: 1;
  min-width: 0;
  display: flex;
  flex-direction: column;
  overflow: hidden;
  padding: 11px 30px 0 32px;
  background: linear-gradient(90deg, #c4c4c4, #f0f0f0 20px);
}
.panel-head {
  flex: none;
  display: flex;
  align-items: center;
  justify-content: space-between;
  height: 37px;
  padding: 0 5px 0 7px;
  background: #e8f5fd;
  border-top: 1px solid #a9cde3;
}
h1 {
  margin: 0;
  padding-bottom: 4px;
  font-size: 15px;
  color: #333;
}
.views {
  display: flex;
  gap: 6px;
}
.tabs {
  flex: none;
  display: flex;
  height: 23px;
  border: 1px solid #bbb;
  background: #fafafa;
  font-family: "Liberation Sans", Arial, sans-serif;
}
.tabs button {
  gap: 4px;
  padding: 2px 15px 0;
}
.tabs .first {
  font-weight: bold;
}
.tabs .active {
  height: 23px;
  margin: -1px 0 0 2px;
  padding: 0 8px 0 13px;
  background: #fff;
  border: 1px solid #bbb;
  border-top: 2px solid #558c94;
  border-bottom: none;
}
.tabs .after-menu {
  padding-left: 7px;
}
.tabs .has-menu {
  padding-right: 9px;
}
.cards {
  flex: 1;
  min-height: 0;
  overflow: hidden;
  display: grid;
  grid-template-columns: repeat(auto-fill, 280px);
  grid-auto-rows: 306px;
  align-content: start;
  gap: 20px;
  padding: 14px 42px 0;
  background: #fff;
  border: 1px solid #c4c4c4;
  border-width: 0 1px;
}

/* cards */
.card {
  display: flex;
  flex-direction: column;
  border: 1px solid #bbb;
  border-bottom-width: 2px;
  background: #fff;
}
.card-head {
  flex: none;
  display: flex;
  height: 33px;
  background: #f9f9f9;
  border-bottom: 1px solid #bbb;
}
.card-head h2 {
  flex: 1;
  display: flex;
  align-items: center;
  gap: 4px;
  margin: 0;
  padding: 3px 0 0 10px;
  font-family: "Open Sans", sans-serif;
  font-size: 14px;
  font-weight: normal;
  line-height: 18px;
  color: #444;
}
.card-head button {
  width: 34px;
  border-left: 1px solid #bbb;
  color: #000;
}
.card-body {
  flex: 1;
  display: flex;
  min-height: 0;
}
.table-wrap {
  flex: 1;
  overflow: hidden;
  padding: 13px 0 0 13px;
}
table {
  width: 237px;
  table-layout: fixed;
  border-collapse: separate;
  border-spacing: 0;
  font-family: "Trebuchet MS", Lato, sans-serif;
  font-size: 11px;
}
td {
  height: 26px;
  padding: 0 0 2px 10px;
  border-top: 1px solid #d6d6d6;
  white-space: nowrap;
}
tr:nth-child(odd) td {
  background: #f9f9f9;
}
td:nth-child(2) {
  width: 54px;
}
td:nth-child(3) {
  width: 43px;
  color: #666;
}
.wide-table {
  width: 100%;
}
.wide-table td:nth-child(2) {
  width: 70px;
}
.wide-table td:nth-child(3) {
  width: 16px;
}
.short-table {
  width: 235px;
}
.short-table td:nth-child(2) {
  width: 49px;
}
.short-table td:nth-child(3) {
  width: 44px;
}

/* scrollbars */
.scrollbar {
  flex: none;
  display: flex;
  flex-direction: column;
  align-items: center;
  width: 17px;
  padding: 7px 0;
  background: #f1f1f1;
}
.scrollbar svg {
  width: 8px;
  height: 4px;
}
.scrollbar .up {
  margin-bottom: 6px;
  color: #999;
}
.scrollbar .down {
  margin-top: auto;
  color: #444;
}
.thumb {
  width: 13px;
  background: #bcbcbc;
  border: 1px solid #a9a9a9;
}
.thumb-small {
  height: 17px;
}
.thumb-medium {
  height: 88px;
}
.thumb-large {
  height: 110px;
}
.thumb-full {
  flex: 1;
}
.thumb-page {
  flex: 1;
  margin-bottom: 35px;
}

/* right rail */
.rail {
  flex: none;
  display: flex;
  flex-direction: column;
  justify-content: flex-end;
  width: 58px;
  background: linear-gradient(90deg, #cdcdcd, #f1f1f1 18px);
}
.rail-title {
  align-self: flex-start;
  writing-mode: vertical-rl;
  transform: rotate(180deg);
  font-size: 17px;
  font-weight: 600;
  line-height: 24px;
  white-space: nowrap;
}
.rail-toggle {
  --arrow: #cbcbcb;
  width: 37px;
  height: 28px;
  margin: 6px 0 3px;
  background: #cbcbcb;
  border-radius: 0 4px 4px 0;
  color: #eee;
}
.rail .pager {
  background: #ececec;
  color: #d2d2d2;
}

/* taskbar */
.taskbar {
  flex: none;
  display: flex;
  align-items: center;
  height: 40px;
  padding-left: 8px;
  background: linear-gradient(90deg, #8098bb, #a8bedc 6%, #a8bedc 84%, #8194b0 87%);
  border-top: 1px solid #33486b;
}
.taskbar button {
  width: 62px;
  height: 39px;
}
.taskbar .start {
  width: 38px;
  margin-right: 12px;
}
.taskbar .running {
  width: 59px;
  margin-left: 1px;
  background: linear-gradient(#eef3f9, #ccd8e8);
  border: 1px solid #4c5f7d;
  border-radius: 3px;
}
.join-text {
  font-size: 8px;
  font-weight: bold;
  fill: #fff;
}
.taskbar .show-desktop {
  width: 15px;
  margin-left: auto;
  background: linear-gradient(135deg, #8fa5c4, #2f4c74);
  border: 1px solid #32445f;
}
```
